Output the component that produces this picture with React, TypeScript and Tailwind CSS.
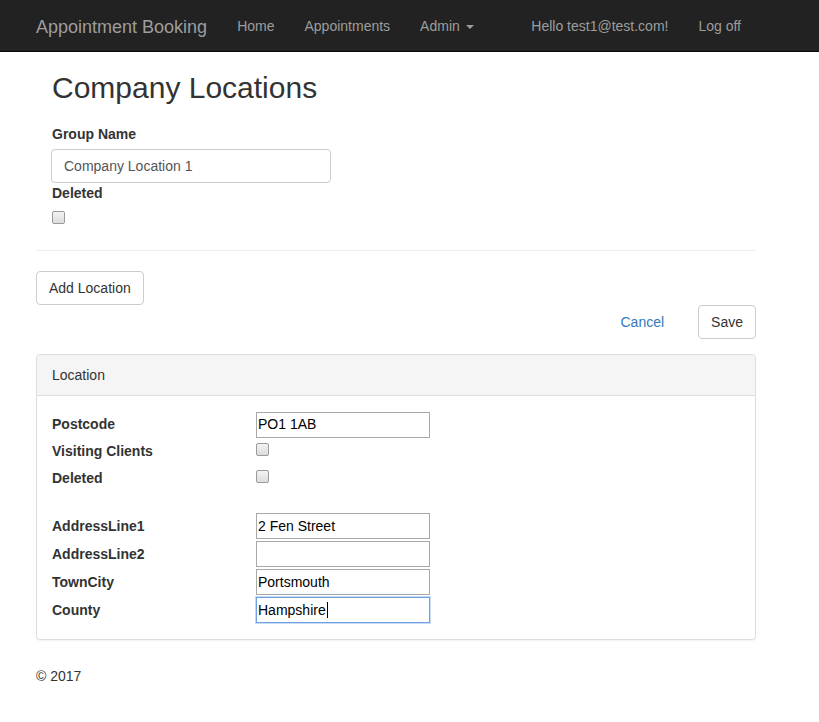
import React from "react";

const font = { fontFamily: '"Liberation Sans", Arial, sans-serif' };

function Checkbox() {
  return (
    <span className="inline-block h-[13px] w-[13px] rounded-[2px] border border-[#9a9a9a] bg-gradient-to-b from-[#f3f3f3] to-[#dcdcdc]" />
  );
}

function NavBar() {
  return (
    <nav className="h-[52px] border-b border-[#080808] bg-[#222222] text-[#9d9d9d]">
      <div className="mx-[36px] flex h-[51px] w-[720px] items-center pt-[2px]">
        <span className="mr-[15px] text-[18px] leading-[20px]">Appointment Booking</span>
        <span className="px-[15px] text-[14px]">Home</span>
        <span className="px-[15px] text-[14px]">Appointments</span>
        <span className="flex items-center px-[15px] text-[14px]">
          Admin
          <span className="ml-[6px] h-0 w-0 border-x-[4px] border-t-[4px] border-x-transparent border-t-[#9d9d9d]" />
        </span>
        <div className="ml-auto flex">
          <span className="px-[15px] text-[14px]">Hello test1@test.com!</span>
          <span className="px-[15px] text-[14px]">Log off</span>
        </div>
      </div>
    </nav>
  );
}

function Row({
  label,
  h,
  children,
}: {
  label: string;
  h: string;
  children?: React.ReactNode;
}) {
  return (
    <div className={`flex items-center ${h}`}>
      <span className="w-[204px] text-[14px] font-bold">{label}</span>
      {children}
    </div>
  );
}

function Field({ value, focused }: { value: string; focused?: boolean }) {
  return (
    <div
      className={`flex h-[26px] w-[174px] items-center border px-[1px] text-[14px] text-black ${
        focused ? "border-[#6fa0e4] shadow-[0_0_0_1px_#c7dbf6]" : "border-[#a9a9a9]"
      }`}
    >
      {value}
      {focused && <span className="ml-[1px] h-[16px] w-[1px] bg-black" />}
    </div>
  );
}

export default function App() {
  return (
    <div className="min-h-[722px] bg-white text-[#333333]" style={font}>
      <NavBar />
      <div className="mx-[36px] w-[720px]">
        <div className="px-[16px]">
          <h2 className="mt-[19px] mb-[10px] text-[30px] leading-[33px]">Company Locations</h2>
          <label className="mt-[20px] mb-[5px] block text-[14px] font-bold leading-[20px]">Group Name</label>
          <div className="-ml-[1px] flex h-[34px] w-[280px] items-center rounded-[4px] border border-[#cccccc] px-[12px] text-[14px] text-[#555555]">
            Company Location 1
          </div>
          <label className="block text-[14px] font-bold leading-[20px]">Deleted</label>
          <div className="mt-[8px] flex">
            <Checkbox />
          </div>
        </div>
        <hr className="mt-[26px] mb-[20px] border-t border-[#eeeeee]" />
        <button className="h-[34px] rounded-[4px] border border-[#cccccc] bg-white px-[12px] text-[14px] text-[#333333]">
          Add Location
        </button>
        <div className="flex items-center justify-end">
          <span className="mr-[34px] text-[14px] text-[#337ab7]">Cancel</span>
          <button className="h-[34px] rounded-[4px] border border-[#cccccc] bg-white px-[12px] text-[14px] text-[#333333]">
            Save
          </button>
        </div>
        <div className="mt-[15px] rounded-[4px] border border-[#dddddd] shadow-[0_1px_1px_rgba(0,0,0,0.05)]">
          <div className="rounded-t-[4px] border-b border-[#dddddd] bg-[#f5f5f5] px-[15px] py-[10px] text-[14px] leading-[20px]">
            Location
          </div>
          <div className="px-[15px] py-[15px]">
            <Row label="Postcode" h="h-[27px]">
              <Field value="PO1 1AB" />
            </Row>
            <Row label="Visiting Clients" h="h-[27px]">
              <span className="-mt-[4px] flex">
                <Checkbox />
              </span>
            </Row>
            <Row label="Deleted" h="h-[27px]">
              <span className="-mt-[4px] flex">
                <Checkbox />
              </span>
            </Row>
            <div className="h-[20px]" />
            <Row label="AddressLine1" h="h-[28px]">
              <Field value="2 Fen Street" />
            </Row>
            <Row label="AddressLine2" h="h-[28px]">
              <Field value="" />
            </Row>
            <Row label="TownCity" h="h-[28px]">
              <Field value="Portsmouth" />
            </Row>
            <Row label="County" h="h-[28px]">
              <Field value="Hampshire" focused />
            </Row>
          </div>
        </div>
        <footer className="mt-[26px] text-[14px] leading-[20px]">© 2017</footer>
      </div>
    </div>
  );
}
